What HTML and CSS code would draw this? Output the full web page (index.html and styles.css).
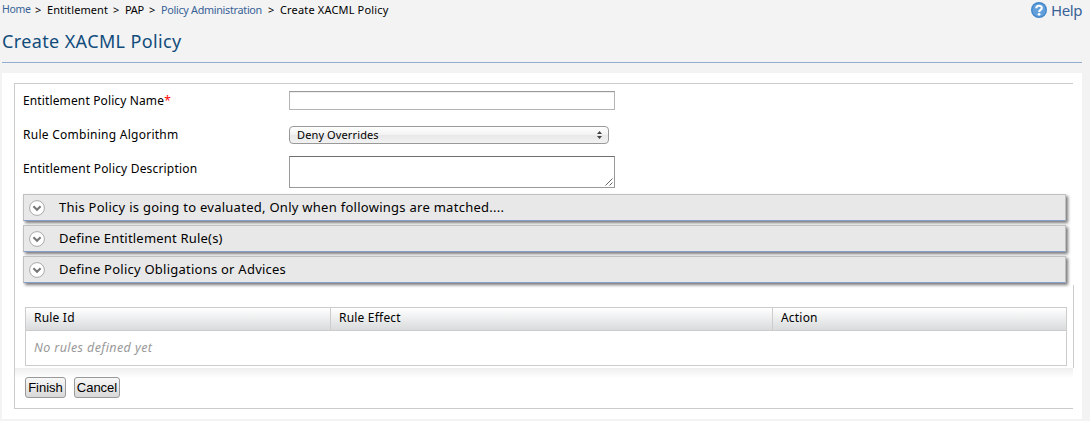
FILE: index.html
```html
<!DOCTYPE html>
<html lang="en">
<head>
<meta charset="utf-8">
<title>Create XACML Policy</title>
<link rel="stylesheet" href="styles.css">
</head>
<body>
<header class="topbar">
  <nav class="crumbs">
    <a class="crumb-home">Home</a><span class="sep">&gt;</span><span class="crumb-ent">Entitlement</span><span class="sep">&gt;</span><span class="crumb-pap">PAP</span><span class="sep">&gt;</span><a class="crumb-admin">Policy Administration</a><span class="sep">&gt;</span><span class="crumb-current">Create XACML Policy</span>
  </nav>
  <a class="help">
    <svg width="16" height="16" viewBox="0 0 16 16"><circle cx="8" cy="8" r="8" fill="#4287cb"/><circle cx="8" cy="8" r="6.6" fill="#639fdb"/><path d="M5.3 6.2C5.3 2.9 10.8 3 10.8 5.9C10.8 7.8 8.1 7.8 8.1 9.9" fill="none" stroke="#fff" stroke-width="2.1"/><circle cx="8.1" cy="12.3" r="1.4" fill="#fff"/></svg>
    <span>Help</span>
  </a>
</header>
<h1 class="title">Create XACML Policy</h1>
<main class="panel">
  <div class="frame">
    <form class="form">
      <div class="row row-name"><label class="l-name">Entitlement Policy Name<span class="required">*</span></label><div class="input"></div></div>
      <div class="row row-algo"><label class="l-algo">Rule Combining Algorithm</label><div class="select"><span>Deny Overrides</span><svg width="5" height="8" viewBox="0 0 5 8"><path d="M0 3L2.5 0L5 3ZM0 5L2.5 8L5 5Z" fill="#444"/></svg></div></div>
      <div class="row row-desc"><label class="l-desc">Entitlement Policy Description</label><div class="textarea"><svg width="8" height="8" viewBox="0 0 8 8"><path d="M0.5 7.5L7.5 0.5M4.5 7.5L7.5 4.5" stroke="#555" stroke-width="0.9"/></svg></div></div>
    </form>
    <section class="accordion">
      <div class="bar"><svg width="16" height="16" viewBox="0 0 16 16"><circle cx="8" cy="8" r="7.4" fill="#fff" stroke="#aaa"/><path d="M4.4 6.2L8 9.7L11.6 6.2" fill="none" stroke="#777" stroke-width="2.1"/></svg><span class="b-one">This Policy is going to evaluated, Only when followings are matched....</span></div>
      <div class="bar"><svg width="16" height="16" viewBox="0 0 16 16"><circle cx="8" cy="8" r="7.4" fill="#fff" stroke="#aaa"/><path d="M4.4 6.2L8 9.7L11.6 6.2" fill="none" stroke="#777" stroke-width="2.1"/></svg><span class="b-two">Define Entitlement Rule(s)</span></div>
      <div class="bar"><svg width="16" height="16" viewBox="0 0 16 16"><circle cx="8" cy="8" r="7.4" fill="#fff" stroke="#aaa"/><path d="M4.4 6.2L8 9.7L11.6 6.2" fill="none" stroke="#777" stroke-width="2.1"/></svg><span class="b-three">Define Policy Obligations or Advices</span></div>
    </section>
    <section class="rules">
      <div class="table">
        <div class="thead"><span>Rule Id</span><span>Rule Effect</span><span>Action</span></div>
        <div class="empty">No rules defined yet</div>
      </div>
    </section>
    <footer class="actions"><div class="button finish">Finish</div><div class="button cancel">Cancel</div></footer>
  </div>
</main>
</body>
</html>
```
FILE: styles.css
```css
* { box-sizing: border-box; }
body {
  margin: 0;
  width: 1090px;
  height: 421px;
  overflow: hidden;
  background: #f3f3f3;
  color: #000;
  font: 12px/16px "Noto Sans", "Open Sans", sans-serif;
}
svg { display: block; flex: none; }
.topbar { display: flex; justify-content: space-between; height: 20px; padding: 2px 8px 0 2px; }
.crumbs { display: flex; font-size: 11px; line-height: 16px; white-space: nowrap; }
.crumbs a { color: #386297; }
.sep { width: 17px; padding-left: 5px; }
.crumb-home { width: 28px; font-size: 10.5px; letter-spacing: -0.35px; line-height: 14px; }
.crumb-ent { width: 61px; letter-spacing: 0.1px; }
.crumb-pap { width: 19px; letter-spacing: -0.3px; }
.crumb-admin { width: 102px; font-size: 10.8px; letter-spacing: -0.3px; }
.crumb-current { letter-spacing: 0.16px; }
.help { display: flex; gap: 4px; color: #386297; font-size: 15px; letter-spacing: -0.4px; }
.title {
  height: 43px;
  margin: 0 8px 0 2px;
  padding-top: 9px;
  border-bottom: 1px solid #94aed1;
  color: #114c7b;
  font-size: 18px;
  font-weight: 400;
  letter-spacing: 0.38px;
  line-height: 24px;
}
.panel { width: 1080px; height: 346px; margin: 10px 0 0 2px; padding: 10px 9px 0 12px; background: #fff; }
.frame { height: 326px; border: 1px solid #ccc; border-right: 0; }
.form { height: 110px; padding: 7px 0 0 8px; }
.row { display: flex; align-items: flex-start; }
.row label { width: 266px; padding-top: 2px; white-space: nowrap; }
.row .l-name { letter-spacing: 0.13px; }
.row .l-algo { padding-top: 1px; letter-spacing: 0.26px; }
.row .l-desc { padding-top: 5px; letter-spacing: 0.18px; }
.required { color: red; }
.row-name { height: 35px; }
.row-algo { height: 30px; }
.row-desc { height: 32px; }
.input { width: 326px; height: 19px; border: 1px solid #b4b4b4; border-top-color: #999; box-shadow: inset 0 1px 1px #eee; }
.select {
  display: flex;
  justify-content: space-between;
  align-items: center;
  width: 320px;
  height: 18px;
  padding: 0 6px 0 7px;
  border: 1px solid #999;
  border-radius: 4px;
  background: linear-gradient(#fff, #f2f2f2 50%, #e8e8e8 51%, #f2f2f2);
  font-size: 11px;
  letter-spacing: 0.12px;
}
.textarea { display: flex; justify-content: flex-end; align-items: flex-end; width: 326px; height: 32px; padding: 0 1px 1px 0; border: 1px solid #999; border-top-color: #707070; }
.accordion { display: grid; gap: 4px; width: 1043px; margin-left: 8px; }
.bar {
  display: flex;
  align-items: center;
  gap: 14px;
  height: 27px;
  padding-left: 5px;
  border: 1px solid #c0c0c0;
  border-bottom-color: #879fcb;
  background: #e8e8e8;
  box-shadow: 2px 2px 3px #777;
  font-size: 13px;
  white-space: nowrap;
}
.bar span { padding-bottom: 2px; }
.b-one { letter-spacing: 0.27px; }
.b-two { letter-spacing: 0.2px; }
.b-three { letter-spacing: 0.24px; }
.rules { width: 1059px; height: 83px; margin-top: 2px; padding: 22px 0 0 10px; border-right: 1px solid #ccc; }
.table { width: 1042px; height: 59px; border: 1px solid #ccc; }
.thead { display: grid; grid-template-columns: 305px 442px 293px; height: 23px; border-bottom: 1px solid #ccc; background: linear-gradient(#fff, #d9dbdc); letter-spacing: 0.2px; line-height: 20px; }
.thead span { padding-left: 8px; border-right: 1px solid #ccc; }
.thead span:last-child { border-right: 0; }
.empty { padding: 9px 8px; color: #999; font-size: 12.5px; font-style: italic; letter-spacing: 0.4px; }
.actions { display: flex; gap: 8px; height: 40px; padding: 9px 0 0 10px; background: linear-gradient(#eee, #fff 10px); }
.button {
  width: 41px;
  height: 21px;
  border: 1px solid #999;
  border-radius: 3px;
  background: linear-gradient(#f8f8f8, #d8d8d8);
  font: 13px/19px "Liberation Sans", Arial, sans-serif;
  text-align: center;
}
.cancel { width: 46px; }
```
